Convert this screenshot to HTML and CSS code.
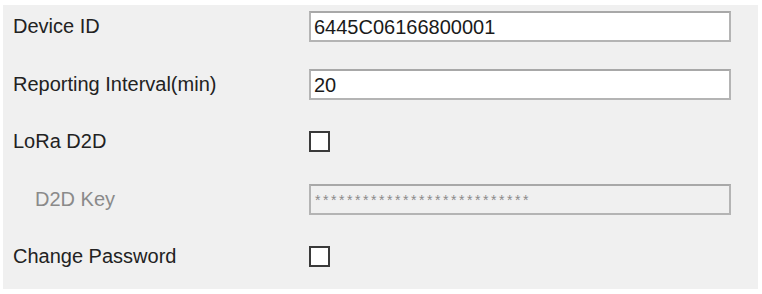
FILE: index.html
```html
<!DOCTYPE html>
<html lang="en">
<head>
    <meta charset="UTF-8">
    <title>Device Settings</title>
    <link rel="stylesheet" href="styles.css">
</head>
<body>
    <div class="panel">
        <div class="row">
            <label class="label">Device ID</label>
            <div class="field">6445C06166800001</div>
        </div>
        <div class="row">
            <label class="label">Reporting Interval(min)</label>
            <div class="field">20</div>
        </div>
        <div class="row">
            <label class="label">LoRa D2D</label>
            <span class="check"></span>
        </div>
        <div class="row">
            <label class="label sub">D2D Key</label>
            <div class="field disabled">***************************</div>
        </div>
        <div class="row">
            <label class="label">Change Password</label>
            <span class="check"></span>
        </div>
    </div>
</body>
</html>
```

FILE: styles.css
```css
* {
    margin: 0;
    padding: 0;
    box-sizing: border-box;
    font-family: 'Liberation Sans', Arial, sans-serif;
}

body {
    background-color: #fff;
    padding: 5px 4px 5px 3px;
}

.panel {
    background-color: #f0f0f0;
    height: 284px;
    padding: 6px 27px 0 10px;
    display: flex;
    flex-direction: column;
    gap: 26.5px;
}

.row {
    display: flex;
    align-items: center;
    height: 31px;
}

.label {
    width: 296px;
    font-size: 20px;
    color: #222;
}

.label.sub {
    padding-left: 22px;
    color: #8a8a8a;
}

.field {
    flex: 1;
    height: 31px;
    background-color: #fff;
    border: 2px solid #b4b4b4;
    border-top-color: #a8a8a8;
    font-size: 20px;
    color: #1a1a1a;
    padding: 2px 3px 0;
    line-height: 24px;
}

.field.disabled {
    background-color: #f0f0f0;
    color: #8a8a8a;
    font-size: 14px;
    letter-spacing: 2.55px;
    padding: 5px 4px 0;
    line-height: 18px;
}

.check {
    width: 21px;
    height: 21px;
    background-color: #fff;
    border: 2px solid #3a3a3a;
}
```
